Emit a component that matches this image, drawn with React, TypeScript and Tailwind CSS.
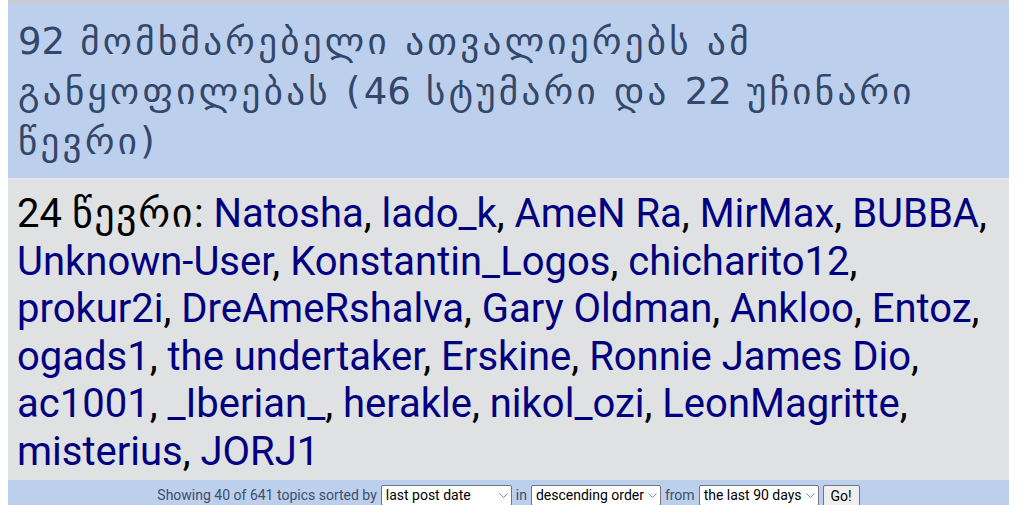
import React from "react";

const users = [
  "Natosha", "lado_k", "AmeN Ra", "MirMax", "BUBBA", "Unknown-User", "Konstantin_Logos",
  "chicharito12", "prokur2i", "DreAmeRshalva", "Gary Oldman", "Ankloo", "Entoz", "ogads1",
  "the undertaker", "Erskine", "Ronnie James Dio", "ac1001", "_Iberian_", "herakle",
  "nikol_ozi", "LeonMagritte", "misterius", "JORJ1",
];

function Sel({ label, w }: { label: string; w: string }) {
  return (
    <span className={`inline-flex shrink-0 whitespace-nowrap items-center justify-between h-[21px] border border-[#767676] rounded-[2px] bg-white text-black pl-[4px] pr-[3px] ${w}`}>
      <span>{label}</span>
      <svg width="9" height="5" viewBox="0 0 9 5">
        <path d="M0.5 0.5l4 4 4-4" fill="none" stroke="#888" strokeWidth="1" />
      </svg>
    </span>
  );
}

const geo = "'DejaVu Sans', sans-serif";

export default function App() {
  return (
    <div className="w-[1024px] h-[505px] overflow-hidden bg-white" style={{ fontFamily: "Roboto, 'DejaVu Sans', sans-serif" }}>
      <div className="ml-[8px] w-[1001px]">
        <div className="h-[3px] bg-[#c9ccd0]" />
        <div className="bg-[#bccfec] text-[#33476a] text-[37px] leading-[50px] pl-[10px] pr-[60px] pt-[14px] h-[175px] tracking-[0.09em]" style={{ fontFamily: geo }}>
          <span className="tracking-normal">92</span> მომხმარებელი ათვალიერებს ამ განყოფილებას (<span className="tracking-normal">46</span> სტუმარი და <span className="tracking-normal">22</span> უჩინარი წევრი)
        </div>
        <div className="h-[2px] bg-[#e4e6e8]" />
        <div className="bg-[#dfe1e2] text-[40px] leading-[47.5px] pl-[9px] pr-[4px] pt-[10px] h-[300px]">
          <span className="text-black">24 <span className="tracking-[0.04em]" style={{ fontFamily: geo }}>წევრი</span>: </span>
          {users.map((u, i) => (
            <React.Fragment key={u}>
              <span className="text-[#000080]">{u}</span>
              {i < users.length - 1 ? <span className="text-black">, </span> : null}
            </React.Fragment>
          ))}
        </div>
        <div className="bg-[#bccfec] h-[30px] flex items-start justify-center pt-[5px] text-[14px] text-[#3d4e6c] gap-[4px] whitespace-nowrap">
          <span className="leading-[21px]">Showing 40 of 641 topics sorted by</span>
          <Sel label="last post date" w="w-[131px]" />
          <span className="leading-[21px]">in</span>
          <Sel label="descending order" w="w-[130px]" />
          <span className="leading-[21px]">from</span>
          <Sel label="the last 90 days" w="w-[120px]" />
          <span className="inline-flex shrink-0 items-center justify-center h-[22px] w-[37px] border border-[#767676] rounded-[2px] bg-[#efefef] text-black">Go!</span>
        </div>
      </div>
    </div>
  );
}
